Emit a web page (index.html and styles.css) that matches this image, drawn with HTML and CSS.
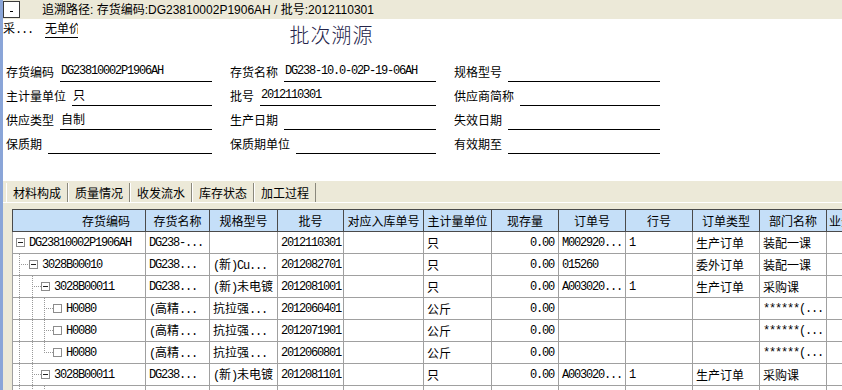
FILE: index.html
```html
<!DOCTYPE html>
<html lang="zh-CN">
<head>
  <meta charset="UTF-8">
  <title>批次溯源</title>
  <link rel="stylesheet" href="styles.css">
</head>
<body>
<div class="frame">

  <div class="path">
    <span class="fold"></span>
    <span class="path-text">追溯路径: 存货编码:DG23810002P1906AH / 批号:2012110301</span>
  </div>

  <div class="head">
    <div class="opts">
      <span class="opt">采<span class="m">...</span></span>
      <span class="opt price">无单价</span>
    </div>
    <h1 class="title">批次溯源</h1>
  </div>

  <div class="form">
    <div class="field"><label>存货编码</label><span class="val m">DG23810002P1906AH</span></div>
    <div class="field"><label>存货名称</label><span class="val m">DG238-10.0-02P-19-06AH</span></div>
    <div class="field"><label>规格型号</label><span class="val"></span></div>

    <div class="field"><label>主计量单位</label><span class="val">只</span></div>
    <div class="field"><label>批号</label><span class="val m">2012110301</span></div>
    <div class="field"><label>供应商简称</label><span class="val"></span></div>

    <div class="field"><label>供应类型</label><span class="val">自制</span></div>
    <div class="field"><label>生产日期</label><span class="val"></span></div>
    <div class="field"><label>失效日期</label><span class="val"></span></div>

    <div class="field"><label>保质期</label><span class="val"></span></div>
    <div class="field"><label>保质期单位</label><span class="val"></span></div>
    <div class="field"><label>有效期至</label><span class="val"></span></div>
  </div>

  <div class="tabs">
    <span class="tab active">材料构成</span>
    <span class="tab">质量情况</span>
    <span class="tab">收发流水</span>
    <span class="tab">库存状态</span>
    <span class="tab">加工过程</span>
  </div>

  <div class="panel">
    <table class="grid">
      <colgroup>
        <col style="width:133px"><col style="width:64px"><col style="width:68px"><col style="width:66px">
        <col style="width:80px"><col style="width:68px"><col style="width:67px"><col style="width:67px">
        <col style="width:67px"><col style="width:67px"><col style="width:67px"><col style="width:70px">
      </colgroup>
      <thead>
        <tr>
          <th class="first">存货编码</th><th>存货名称</th><th>规格型号</th><th>批号</th>
          <th>对应入库单号</th><th>主计量单位</th><th>现存量</th><th>订单号</th>
          <th>行号</th><th>订单类型</th><th>部门名称</th><th class="last">业务类型</th>
        </tr>
      </thead>
      <tbody>
        <tr>
          <td class="tree"><span class="node"><b class="box minus"></b><span class="m">DG23810002P1906AH</span></span></td>
          <td class="m">DG238-...</td><td></td><td class="m">2012110301</td><td></td>
          <td>只</td><td class="m num">0.00</td><td class="m">M002920...</td><td class="m">1</td>
          <td>生产订单</td><td>装配一课</td><td></td>
        </tr>
        <tr>
          <td class="tree"><span class="node"><i class="tee"></i><b class="box minus"></b><span class="m">3028B00010</span></span></td>
          <td class="m">DG238...</td><td><span class="m">(</span>新<span class="m">)Cu...</span></td><td class="m">2012082701</td><td></td>
          <td>只</td><td class="m num">0.00</td><td class="m">015260</td><td></td>
          <td>委外订单</td><td>装配一课</td><td></td>
        </tr>
        <tr>
          <td class="tree"><span class="node"><i class="pipe"></i><i class="tee"></i><b class="box minus"></b><span class="m">3028B00011</span></span></td>
          <td class="m">DG238...</td><td><span class="m">(</span>新<span class="m">)</span>未电镀</td><td class="m">2012081001</td><td></td>
          <td>只</td><td class="m num">0.00</td><td class="m">A003020...</td><td class="m">1</td>
          <td>生产订单</td><td>采购课</td><td></td>
        </tr>
        <tr>
          <td class="tree"><span class="node"><i class="pipe"></i><i class="pipe"></i><i class="tee"></i><b class="box"></b><span class="m">H0080</span></span></td>
          <td><span class="m">(</span>高精<span class="m">...</span></td><td>抗拉强<span class="m">...</span></td><td class="m">2012060401</td><td></td>
          <td>公斤</td><td class="m num">0.00</td><td></td><td></td>
          <td></td><td class="m">******(...</td><td></td>
        </tr>
        <tr>
          <td class="tree"><span class="node"><i class="pipe"></i><i class="pipe"></i><i class="tee"></i><b class="box"></b><span class="m">H0080</span></span></td>
          <td><span class="m">(</span>高精<span class="m">...</span></td><td>抗拉强<span class="m">...</span></td><td class="m">2012071901</td><td></td>
          <td>公斤</td><td class="m num">0.00</td><td></td><td></td>
          <td></td><td class="m">******(...</td><td></td>
        </tr>
        <tr>
          <td class="tree"><span class="node"><i class="pipe"></i><i class="pipe"></i><i class="ell"></i><b class="box"></b><span class="m">H0080</span></span></td>
          <td><span class="m">(</span>高精<span class="m">...</span></td><td>抗拉强<span class="m">...</span></td><td class="m">2012060801</td><td></td>
          <td>公斤</td><td class="m num">0.00</td><td></td><td></td>
          <td></td><td class="m">******(...</td><td></td>
        </tr>
        <tr>
          <td class="tree"><span class="node"><i class="pipe"></i><i class="tee"></i><b class="box minus"></b><span class="m">3028B00011</span></span></td>
          <td class="m">DG238...</td><td><span class="m">(</span>新<span class="m">)</span>未电镀</td><td class="m">2012081101</td><td></td>
          <td>只</td><td class="m num">0.00</td><td class="m">A003020...</td><td class="m">1</td>
          <td>生产订单</td><td>采购课</td><td></td>
        </tr>
        <tr>
          <td class="tree"><span class="node"><i class="pipe"></i><i class="pipe"></i><i class="tee"></i></span></td>
          <td></td><td></td><td></td><td></td><td></td><td></td><td></td><td></td><td></td><td></td><td></td>
        </tr>
      </tbody>
    </table>
  </div>

</div>
</body>
</html>
```

FILE: styles.css
```css
body { margin: 0; font: 12px/14px "Noto Sans CJK SC", sans-serif; color: #000; background: #fff; overflow: hidden; }
.frame { border-left: 3px solid #8aa5d8; width: 839px; height: 390px; overflow: hidden; }
.m { font-family: "Liberation Mono", "Noto Sans CJK SC", monospace; font-size: 12px; letter-spacing: -1.2px; }

/* top path bar */
.path { height: 19px; background: #ece9d8; display: flex; align-items: center; }
.fold {
  width: 17px; height: 17px; box-sizing: border-box; border: 1px solid #3a3a3a;
  background: linear-gradient(#000, #000) 6px 9px / 3px 1px no-repeat #fff;
}
.path-text { margin-left: 22px; font-family: "Liberation Sans", "Noto Sans CJK SC", sans-serif; }

/* title row */
.head { width: 657px; height: 39px; display: grid; grid-template-columns: 1fr auto 1fr; align-items: start; }
.opts { display: flex; margin-top: 1px; }
.opt { line-height: 16px; white-space: nowrap; }
.price { margin-left: 12px; width: 33px; overflow: hidden; border-bottom: 1px solid #000; }
.title { margin: 4px 0 0; font-size: 20px; line-height: 24px; font-weight: 300; color: #24244a; letter-spacing: 1px; }

/* info form */
.form { display: grid; grid-template-columns: repeat(3, 206px); column-gap: 18px; grid-auto-rows: 24px; padding-left: 3px; }
.field { display: flex; align-items: flex-end; }
.field label { padding-bottom: 3px; white-space: nowrap; }
.val {
  flex: 1; margin-left: 6px; height: 20px; box-sizing: border-box; padding: 0 0 3px 1px;
  border-bottom: 1px solid #000; display: flex; align-items: flex-end; white-space: nowrap; overflow: hidden;
}

/* tabs */
.tabs { margin-top: 27px; height: 21px; background: #ece9d8; display: flex; align-items: flex-end; padding-left: 3px; }
.tab { height: 19px; line-height: 19px; padding: 0 6px; border-left: 1px solid #fff; border-right: 1px solid #8a887c; }
.panel { border-top: 1px solid #fff; background: #ece9d8; padding: 6px 0 0 9px; }

/* grid */
.grid { border-collapse: collapse; table-layout: fixed; width: 884px; background: #fff; }
.grid th, .grid td {
  height: 21px; padding: 0 3px; border: 1px solid #a0a0a0; white-space: nowrap; overflow: hidden;
  text-align: left; font-weight: normal; vertical-align: middle;
}
.grid th { background: #c5dff8; border-color: #4a4a4a; text-align: center; font-family: "Noto Sans CJK SC", sans-serif; }
.grid th.first { text-align: right; padding-right: 15px; }
.grid th.last { text-align: left; padding-left: 2px; }
.grid td.num { text-align: right; padding-right: 4px; }
.grid td.tree { padding-left: 3px; }

/* tree lines */
.node { display: flex; align-items: center; height: 21px; }
.node i { width: 12px; align-self: stretch; flex: none; }
.node i:first-child { width: 13px; }
.pipe { background: repeating-linear-gradient(#999 0 1px, transparent 1px 2px) 3px 0 / 1px 100% no-repeat; }
.tee {
  background:
    repeating-linear-gradient(#999 0 1px, transparent 1px 2px) 3px 0 / 1px 100% no-repeat,
    repeating-linear-gradient(90deg, #999 0 1px, transparent 1px 2px) 3px 50% / calc(100% - 3px) 1px no-repeat;
}
.ell {
  background:
    repeating-linear-gradient(#999 0 1px, transparent 1px 2px) 3px 0 / 1px 50% no-repeat,
    repeating-linear-gradient(90deg, #999 0 1px, transparent 1px 2px) 3px 50% / calc(100% - 3px) 1px no-repeat;
}
.box { width: 9px; height: 9px; box-sizing: border-box; border: 1px solid #8c8c8c; background: #fff; margin-right: 4px; flex: none; }
.box.minus { background: linear-gradient(#222, #222) center / 5px 1px no-repeat #fff; }
```
